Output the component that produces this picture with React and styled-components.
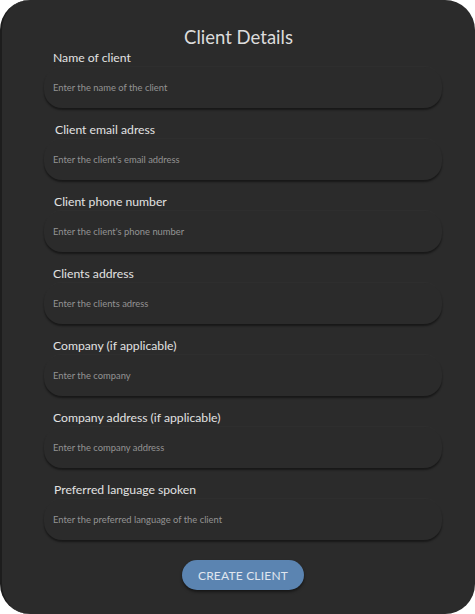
import React from "react";
import styled, { createGlobalStyle } from "styled-components";

const GlobalStyle = createGlobalStyle`
  html, body {
    margin: 0;
    padding: 0;
    background: #ffffff;
  }
  * {
    box-sizing: border-box;
  }
`;

const Card = styled.form`
  width: 475px;
  height: 614px;
  background-color: #2b2b2b;
  border-radius: 30px;
  border-left: 2px solid #1d1d1d;
  padding: 26px 33px 0 42px;
  display: flex;
  flex-direction: column;
  font-family: Lato, "Open Sans", sans-serif;
`;

const Title = styled.h2`
  margin: 0 0 2px 0;
  font-size: 18.5px;
  line-height: 22px;
  font-weight: normal;
  color: #dcdcdc;
  text-align: center;
  padding-right: 9px;
`;

const Fields = styled.div`
  display: flex;
  flex-direction: column;
  gap: 14px;
`;

const Field = styled.div`
  display: flex;
  flex-direction: column;
  gap: 2px;
`;

const Label = styled.label`
  font-size: 12.2px;
  line-height: 15px;
  color: #e2e2e2;
  padding-left: ${(p) => p.$shift || 9}px;
`;

const Input = styled.input`
  height: 41px;
  width: 100%;
  border: none;
  outline: none;
  border-radius: 18px;
  background-color: #2b2b2b;
  box-shadow: 0 2px 2px rgba(0, 0, 0, 0.45), 0 -1px 1px rgba(255, 255, 255, 0.02);
  padding: 0 9px;
  font-family: Lato, "Open Sans", sans-serif;
  font-size: 9.4px;
  color: #cccccc;
  &::placeholder {
    color: #939393;
  }
`;

const ButtonRow = styled.div`
  display: flex;
  justify-content: center;
  margin-top: 20px;
`;

const CreateButton = styled.button`
  width: 122px;
  height: 30px;
  border: none;
  border-radius: 15px;
  background-color: #5b84b1;
  color: #e0e6ef;
  font-family: Lato, "Open Sans", sans-serif;
  font-size: 12px;
  letter-spacing: 0.2px;
  box-shadow: 0 2px 3px rgba(0, 0, 0, 0.5);
  cursor: pointer;
`;

const fields = [
  { label: "Name of client", placeholder: "Enter the name of the client", shift: 9 },
  { label: "Client email adress", placeholder: "Enter the client's email address", shift: 11 },
  { label: "Client phone number", placeholder: "Enter the client's phone number", shift: 10 },
  { label: "Clients address", placeholder: "Enter the clients adress", shift: 9 },
  { label: "Company (if applicable)", placeholder: "Enter the company", shift: 9 },
  { label: "Company address (if applicable)", placeholder: "Enter the company address", shift: 9 },
  { label: "Preferred language spoken", placeholder: "Enter the preferred language of the client", shift: 10 },
];

const App = () => {
  return (
    <>
      <GlobalStyle />
      <Card onSubmit={(e) => e.preventDefault()}>
        <Title>Client Details</Title>
        <Fields>
          {fields.map((f) => (
            <Field key={f.label}>
              <Label $shift={f.shift}>{f.label}</Label>
              <Input placeholder={f.placeholder} />
            </Field>
          ))}
        </Fields>
        <ButtonRow>
          <CreateButton type="submit">CREATE CLIENT</CreateButton>
        </ButtonRow>
      </Card>
    </>
  );
};

export default App;
